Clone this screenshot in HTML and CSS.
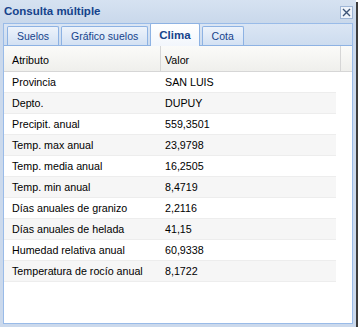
FILE: index.html
```html
<!DOCTYPE html>
<html lang="es">
<head>
    <meta charset="UTF-8">
    <title>Consulta múltiple</title>
    <link rel="stylesheet" href="styles.css">
</head>
<body>

    <div class="window">
        <div class="win-header">
            <span class="win-title">Consulta múltiple</span>
            <span class="tool-close">
                <svg width="13" height="13" viewBox="0 0 13 13">
                    <rect x="0.5" y="0.5" width="12" height="12" fill="#eef3fa" stroke="#9fb6d6"/>
                    <path d="M3 3 L10 10 M10 3 L3 10" stroke="#3d5477" stroke-width="1.4"/>
                </svg>
            </span>
        </div>

        <div class="tab-panel">
            <div class="tab-strip">
                <span class="tab">Suelos</span>
                <span class="tab">Gráfico suelos</span>
                <span class="tab active">Clima</span>
                <span class="tab">Cota</span>
            </div>

            <div class="grid">
                <div class="grid-head">
                    <div class="hd hd-attr">Atributo</div>
                    <div class="hd hd-val">Valor</div>
                    <div class="hd hd-fill"></div>
                </div>
                <table class="grid-rows">
                    <tr><td class="c-attr">Provincia</td><td class="c-val">SAN LUIS</td></tr>
                    <tr><td class="c-attr">Depto.</td><td class="c-val">DUPUY</td></tr>
                    <tr><td class="c-attr">Precipit. anual</td><td class="c-val">559,3501</td></tr>
                    <tr><td class="c-attr">Temp. max anual</td><td class="c-val">23,9798</td></tr>
                    <tr><td class="c-attr">Temp. media anual</td><td class="c-val">16,2505</td></tr>
                    <tr><td class="c-attr">Temp. min anual</td><td class="c-val">8,4719</td></tr>
                    <tr><td class="c-attr">Días anuales de granizo</td><td class="c-val">2,2116</td></tr>
                    <tr><td class="c-attr">Días anuales de helada</td><td class="c-val">41,15</td></tr>
                    <tr><td class="c-attr">Humedad relativa anual</td><td class="c-val">60,9338</td></tr>
                    <tr><td class="c-attr">Temperatura de rocío anual</td><td class="c-val">8,1722</td></tr>
                </table>
            </div>
        </div>
    </div>

</body>
</html>
```

FILE: styles.css
```css
body {
    margin: 0;
    font-family: "Liberation Sans", Arial, sans-serif;
    background: #ffffff;
}
.window {
    width: 356px;
    height: 327px;
    box-sizing: border-box;
    padding: 0 3px 3px 3px;
    background: #cbd9ec;
    box-shadow: 2px 2px 0 #3c3c3c;
    display: flex;
    flex-direction: column;
}
.win-header {
    height: 23px;
    display: flex;
    align-items: center;
    justify-content: space-between;
    background: linear-gradient(#d6e2f1, #c9d8eb);
    margin: 0 -3px;
    padding-left: 4px;
    padding-right: 3px;
}
.win-title {
    font-size: 11.5px;
    font-weight: bold;
    line-height: 23px;
    color: #15428b;
}
.tool-close {
    display: flex;
    margin-top: 1px;
}
.tab-panel {
    flex: 1;
    border: 1px solid #99bbe8;
    display: flex;
    flex-direction: column;
    background: #ffffff;
}
.tab-strip {
    height: 22px;
    box-sizing: border-box;
    display: flex;
    align-items: flex-end;
    gap: 2px;
    padding-left: 3px;
    background: linear-gradient(#dbe6f4, #cddcef);
    border-bottom: 1px solid #8db2e3;
}
.tab {
    height: 19px;
    box-sizing: border-box;
    padding: 0 9px;
    font-size: 10.5px;
    line-height: 18px;
    color: #15428b;
    border: 1px solid #8db2e3;
    border-bottom: none;
    border-radius: 2px 2px 0 0;
    background: linear-gradient(#edf3fb, #d3e1f3);
}
.tab.active {
    height: 23px;
    margin-bottom: -1px;
    padding: 2px 8px 0 8px;
    font-size: 11.5px;
    font-weight: bold;
    background: linear-gradient(#ffffff, #f2f6fc);
}
.grid {
    flex: 1;
    background: #ffffff;
}
.grid-head {
    display: flex;
    height: 26px;
    box-sizing: border-box;
    border-bottom: 1px solid #d6d6d6;
    background: linear-gradient(#fbfbf9, #efefec);
}
.hd {
    box-sizing: border-box;
    border-right: 1px solid #d6d6d6;
    padding: 8px 0 0 0;
    font-size: 10.7px;
    line-height: 13px;
    color: #000000;
}
.hd-attr {
    width: 157px;
    padding-left: 8px;
}
.hd-val {
    width: 180px;
    padding-left: 4px;
}
.hd-fill {
    flex: 1;
    border-right: none;
}
.grid-rows {
    width: 332px;
    border-collapse: collapse;
    font-size: 10.7px;
    color: #000000;
}
.grid-rows td {
    height: 20px;
    padding: 0;
    border-bottom: 1px solid #ededed;
    white-space: nowrap;
}
.grid-rows tr:nth-child(even) td {
    background: #f6f6f6;
}
.c-attr {
    width: 149px;
    padding-left: 8px !important;
}
.c-val {
    padding-left: 4px !important;
}
```
